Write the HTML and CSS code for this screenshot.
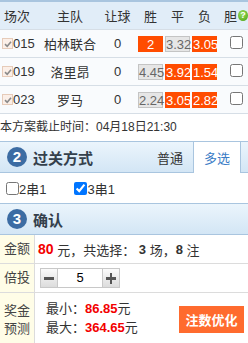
FILE: index.html
```html
<!DOCTYPE html>
<html lang="zh-CN">
<head>
  <meta charset="UTF-8">
  <meta name="viewport" content="width=device-width, initial-scale=1.0">
  <title>确认投注</title>
  <link rel="stylesheet" href="styles.css">
</head>
<body>
  <div class="match-table">
    <div class="match-row head">
      <div class="c-no">场次</div>
      <div>主队</div>
      <div>让球</div>
      <div>胜</div>
      <div>平</div>
      <div>负</div>
      <div class="c-dan">胆<span class="help">?</span></div>
    </div>
    <div class="match-row">
      <div class="c-no"><span class="tick"><svg width="8" height="8" viewBox="0 0 8 8"><path d="M1 4.2 L3.2 6.3 L7 1.8" fill="none" stroke="#8a8a8a" stroke-width="1.6"/></svg></span>015</div>
      <div class="team">柏林联合</div>
      <div>0</div>
      <div><span class="odd on">2</span></div>
      <div><span class="odd">3.32</span></div>
      <div><span class="odd on">3.05</span></div>
      <div class="c-box"><input type="checkbox"></div>
    </div>
    <div class="match-row">
      <div class="c-no"><span class="tick"><svg width="8" height="8" viewBox="0 0 8 8"><path d="M1 4.2 L3.2 6.3 L7 1.8" fill="none" stroke="#8a8a8a" stroke-width="1.6"/></svg></span>019</div>
      <div class="team">洛里昂</div>
      <div>0</div>
      <div><span class="odd">4.45</span></div>
      <div><span class="odd on">3.92</span></div>
      <div><span class="odd on">1.54</span></div>
      <div class="c-box"><input type="checkbox"></div>
    </div>
    <div class="match-row">
      <div class="c-no"><span class="tick"><svg width="8" height="8" viewBox="0 0 8 8"><path d="M1 4.2 L3.2 6.3 L7 1.8" fill="none" stroke="#8a8a8a" stroke-width="1.6"/></svg></span>023</div>
      <div class="team">罗马</div>
      <div>0</div>
      <div><span class="odd">2.24</span></div>
      <div><span class="odd on">3.05</span></div>
      <div><span class="odd on">2.82</span></div>
      <div class="c-box"><input type="checkbox"></div>
    </div>
  </div>

  <p class="deadline">本方案截止时间：04月18日21:30</p>

  <div class="section-bar">
    <span class="step">2</span>
    <span class="section-title">过关方式</span>
    <div class="tabs">
      <span class="tab">普通</span>
      <span class="tab active">多选</span>
    </div>
  </div>
  <div class="pass-list">
    <label><input type="checkbox">2串1</label>
    <label><input type="checkbox" checked>3串1</label>
  </div>

  <div class="section-bar">
    <span class="step">3</span>
    <span class="section-title">确认</span>
  </div>
  <div class="confirm">
    <div class="confirm-row">
      <div class="confirm-label">金额</div>
      <div class="confirm-body"><b class="red big">80</b>&nbsp;元，共选择：&nbsp;<b>3</b>&nbsp;场，<b>8</b>&nbsp;注</div>
    </div>
    <div class="confirm-row">
      <div class="confirm-label">倍投</div>
      <div class="confirm-body">
        <div class="stepper">
          <span class="step-btn minus"></span>
          <span class="step-input">5</span>
          <span class="step-btn plus"></span>
        </div>
      </div>
    </div>
    <div class="confirm-row prize">
      <div class="confirm-label">奖金<br>预测</div>
      <div class="confirm-body">
        <div class="prize-lines">
          <div>最小：<b class="red">86.85</b>元</div>
          <div>最大：<b class="red">364.65</b>元</div>
        </div>
        <button type="button" class="opt-button">注数优化</button>
      </div>
    </div>
  </div>
</body>
</html>
```

FILE: styles.css
```css
body {
  margin: 0;
  width: 248px;
  overflow: hidden;
  font-family: "Liberation Sans", "Noto Sans CJK SC", sans-serif;
  font-size: 13px;
  color: #333;
  background: #fff;
}
.match-row {
  display: grid;
  grid-template-columns: 42px 56px 39px 27px 27px 27px 30px;
  align-items: center;
  height: 28px;
  box-sizing: border-box;
  border-bottom: 1px solid #d6dee6;
  background: #f9fbfd;
  text-align: center;
}
.match-row.head {
  height: 30px;
  border-top: 2px solid #a9c5df;
  background: #e1edf8;
}
.match-row .c-no {
  text-align: left;
  padding-left: 4px;
}
.match-row:not(.head) .c-no {
  padding-left: 2px;
  display: flex;
  align-items: center;
}
.tick {
  display: inline-flex;
  align-items: center;
  justify-content: center;
  width: 9px;
  height: 9px;
  border: 1px solid #e6cbb9;
  background: #fbefe8;
}
.c-dan {
  display: flex;
  align-items: center;
  padding-left: 6px;
}
.help {
  display: inline-block;
  width: 11px;
  height: 11px;
  margin-left: 1px;
  border-radius: 50%;
  background: radial-gradient(circle at 40% 35%, #9be05a, #4a9e12);
  color: #fff;
  font-size: 9px;
  font-weight: bold;
  line-height: 11px;
  text-align: center;
}
.odd {
  display: block;
  width: 25px;
  height: 16px;
  margin: 0 auto;
  box-sizing: border-box;
  line-height: 15px;
  background: #e6e6e6;
  border: 1px solid #c4c4c4;
  color: #666;
}
.odd.on {
  background: #ff4c00;
  border-color: #ff4c00;
  color: #fff;
}
.c-box input {
  margin: 0 0 0 6px;
  width: 13px;
  height: 13px;
}
.deadline {
  margin: 0;
  height: 27px;
  line-height: 27px;
  font-size: 12px;
}
.section-bar {
  display: flex;
  align-items: center;
  height: 32px;
  box-sizing: border-box;
  border-top: 1px solid #a9c5df;
  border-bottom: 1px solid #a9c5df;
  background: linear-gradient(#ebf5fc, #d3e6f5);
}
.step {
  width: 20px;
  height: 20px;
  margin-left: 7px;
  border-radius: 50%;
  background: #3c6ca3;
  color: #fff;
  font-size: 15px;
  font-weight: bold;
  line-height: 20px;
  text-align: center;
}
.section-title {
  margin-left: 6px;
  font-size: 15px;
  font-weight: bold;
  color: #34404c;
}
.tabs {
  display: flex;
  margin-left: auto;
  margin-right: 7px;
  align-self: stretch;
}
.tab {
  width: 46px;
  display: flex;
  align-items: center;
  justify-content: center;
}
.tab.active {
  background: #fff;
  color: #3a7cc6;
  border-left: 1px solid #a9c5df;
  border-right: 1px solid #a9c5df;
  margin-bottom: -1px;
}
.pass-list {
  display: flex;
  align-items: center;
  gap: 24px;
  height: 30px;
  padding-left: 2px;
}
.pass-list label {
  display: flex;
  align-items: center;
}
.pass-list input {
  margin: 0 0 0 4px;
  width: 13px;
  height: 13px;
}
.confirm-row {
  display: flex;
  border-bottom: 1px solid #dcdcdc;
  height: 29px;
  box-sizing: border-box;
}
.confirm-row.prize {
  height: 54px;
  border-bottom: none;
}
.confirm-label {
  width: 34px;
  flex: none;
  border-right: 1px solid #dcdcdc;
  background: #fffde7;
  display: flex;
  align-items: center;
  justify-content: center;
  text-align: center;
  line-height: 18px;
  color: #444;
}
.confirm-body {
  flex: 1;
  display: flex;
  align-items: center;
  padding-left: 3px;
}
.red {
  color: #f30000;
}
.big {
  font-size: 14px;
}
.stepper {
  display: flex;
  margin-left: 2px;
  height: 20px;
}
.step-btn {
  position: relative;
  width: 18px;
  height: 20px;
  box-sizing: border-box;
  border: 1px solid #c8c8c8;
  background: linear-gradient(#fbfbfb, #dcdcdc);
}
.step-btn::before,
.plus::after {
  content: "";
  position: absolute;
  left: 3px;
  right: 3px;
  top: 8px;
  height: 3px;
  background: #555;
}
.plus::after {
  left: 7px;
  right: 7px;
  top: 4px;
  height: 11px;
}
.step-input {
  width: 44px;
  box-sizing: border-box;
  border-top: 1px solid #c8c8c8;
  border-bottom: 1px solid #c8c8c8;
  text-align: center;
  line-height: 18px;
  color: #000;
}
.prize .confirm-body {
  padding-left: 11px;
  align-items: flex-start;
}
.prize-lines {
  padding-top: 6px;
  line-height: 19px;
}
.opt-button {
  margin: 13px 4px 0 auto;
  width: 65px;
  height: 27px;
  border: none;
  background: #ff6b2e;
  color: #fff;
  font-family: inherit;
  font-size: 13px;
  font-weight: bold;
}
```
